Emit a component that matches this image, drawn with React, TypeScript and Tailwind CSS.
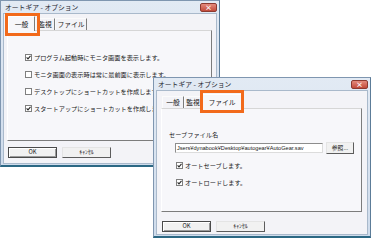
// オートギア オプション画面 — 2枚の比較図
const UI = "font-['Noto_Sans_CJK_JP','Noto_Sans_CJK_SC',sans-serif]";

function Check({ on }: { on: boolean }) {
  return (
    <span className="flex h-[7px] w-[7px] shrink-0 items-center justify-center border border-[#7f7f7f] bg-white">
      {on && (
        <svg viewBox="0 0 5 5" className="h-[5px] w-[5px]">
          <path d="M0.6 2.4 L2 3.9 L4.5 0.9" stroke="#2a2a2a" strokeWidth="1.1" fill="none" />
        </svg>
      )}
    </span>
  );
}

function Row({ on, text }: { on: boolean; text: string }) {
  return (
    <div className="flex h-[17px] items-center gap-[2px] text-[6.2px] text-[#1a1a1a]">
      <Check on={on} />
      <span className="whitespace-nowrap">{text}</span>
    </div>
  );
}

function Tab({ label, active, className }: { label: string; active: boolean; className: string }) {
  return active ? (
    <div
      className={`relative z-10 -mb-px flex h-[15px] items-center justify-center border-l border-t border-r border-l-white border-t-white border-r-[#7c7c7c] bg-[#f7f7fa] text-[6.8px] text-[#1a1a1a] ${className}`}
    >
      {label}
    </div>
  ) : (
    <div
      className={`flex h-[12px] items-center justify-center border-l border-t border-r border-l-[#fbfbfb] border-t-[#fbfbfb] border-r-[#7c7c7c] text-[6.8px] text-[#1a1a1a] ${className}`}
    >
      {label}
    </div>
  );
}

function Btn({ label, primary }: { label: string; primary?: boolean }) {
  return primary ? (
    <div className="flex h-[11px] w-[49px] items-center justify-center border border-[#4a4a4a] bg-[#f1f1f1] text-[5.8px] text-[#1a1a1a] shadow-[inset_1px_1px_#ffffff,inset_-1px_-1px_#9a9a9a]">
      {label}
    </div>
  ) : (
    <div className="flex h-[11px] w-[49px] items-center justify-center border border-l-[#e4e4e4] border-t-[#e4e4e4] border-r-[#5c5c5c] border-b-[#5c5c5c] bg-[#f1f1f1] text-[5.8px] text-[#1a1a1a]">
      {label}
    </div>
  );
}

function Frame({ className, children }: { className: string; children: React.ReactNode }) {
  return (
    <div
      className={`absolute flex flex-col border border-[#7f96b0] border-b-2 border-b-[#2c6884] border-r-[#5c7c98] bg-gradient-to-b from-[#e2eaf4] to-[#cfdcec] px-[2px] pb-[1px] ${UI} ${className}`}
    >
      <div className="relative flex h-[12px] shrink-0 items-center pl-[2px] text-[6.8px] text-[#1e2630]">
        オートギア - オプション
        <span className="absolute right-[0px] top-[2px] flex h-[9px] w-[17px] items-center justify-center rounded-[2px] border border-[#8c3a30] bg-gradient-to-b from-[#e48a7c] to-[#c24a3b] text-[7px] leading-none font-bold text-white">
          ×
        </span>
      </div>
      <div className="flex flex-1 flex-col border border-[#a9b9cb] bg-[#f3f3f7]">{children}</div>
    </div>
  );
}

export default function App() {
  return (
    <div className="relative h-[243px] w-[372px] overflow-hidden bg-white">
      {/* 一般タブ */}
      <Frame className="left-0 top-0 h-[167px] w-[220px]">
        <div className="flex h-[16px] items-end pl-[4px]">
          <Tab label="一般" active className="w-[27px]" />
          <Tab label="監視" active={false} className="w-[20px]" />
          <Tab label="ファイル" active={false} className="w-[32px]" />
        </div>
        <div className="ml-[3px] flex h-[111px] w-[205px] flex-col border border-l-white border-t-[#d6d6d6] border-r-[#7c7c7c] border-b-[#7c7c7c] bg-[#f7f7fa] pl-[17px] pt-[18px]">
          <Row on text="プログラム起動時にモニタ画面を表示します。" />
          <Row on={false} text="モニタ画面の表示時は常に最前面に表示します。" />
          <Row on={false} text="デスクトップにショートカットを作成します。" />
          <Row on text="スタートアップにショートカットを作成します。" />
        </div>
        <div className="mt-[6px] flex gap-[5px] pl-[4px]">
          <Btn label="OK" primary />
          <Btn label="ｷｬﾝｾﾙ" />
        </div>
      </Frame>

      {/* ファイルタブ */}
      <Frame className="left-[153px] top-[77px] z-10 h-[161px] w-[218px]">
        <div className="flex h-[17px] items-end pl-[5px]">
          <Tab label="一般" active={false} className="w-[22px]" />
          <Tab label="監視" active={false} className="w-[18px]" />
          <Tab label="ファイル" active className="w-[40px]" />
        </div>
        <div className="ml-[4px] flex h-[104px] w-[201px] flex-col border border-l-white border-t-[#d6d6d6] border-r-[#7c7c7c] border-b-[#7c7c7c] bg-[#f7f7fa] pt-[21px]">
          <div className="pl-[7px] text-[6.2px] leading-[9px] text-[#1a1a1a]">セーブファイル名</div>
          <div className="mt-[3px] flex items-center gap-[3px] pl-[13px]">
            <div className="flex h-[10px] w-[148px] items-center overflow-hidden whitespace-nowrap border border-l-[#8d8d8d] border-t-[#8d8d8d] border-r-[#dcdcdc] border-b-[#dcdcdc] bg-white pl-[1px] font-['Liberation_Sans',sans-serif] text-[5.6px] text-[#1a1a1a]">
              Jsers¥dynabook¥Desktop¥autogear¥AutoGear.sav
            </div>
            <div className="flex h-[12px] w-[28px] items-center justify-center border border-l-[#e4e4e4] border-t-[#e4e4e4] border-r-[#5c5c5c] border-b-[#5c5c5c] bg-[#f1f1f1] text-[5.8px] text-[#1a1a1a]">
              参照...
            </div>
          </div>
          <div className="mt-[3px] flex flex-col pl-[14px]">
            <Row on text="オートセーブします。" />
            <Row on text="オートロードします。" />
          </div>
        </div>
        <div className="mt-[9px] flex gap-[5px] pl-[5px]">
          <Btn label="OK" primary />
          <Btn label="ｷｬﾝｾﾙ" />
        </div>
      </Frame>

      {/* 注目枠 */}
      <div className="absolute left-[5px] top-[13px] z-20 h-[23px] w-[35px] border-[3px] border-[#f26a1b]" />
      <div className="absolute left-[200px] top-[90px] z-20 h-[23px] w-[44px] border-[3px] border-[#f26a1b]" />
    </div>
  );
}
